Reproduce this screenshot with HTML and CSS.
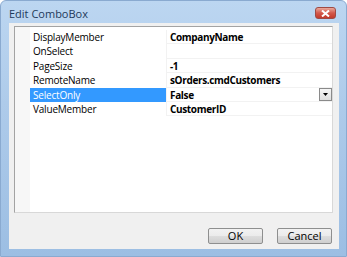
FILE: index.html
```html
<!DOCTYPE html>
<html>
<head>
  <title>Edit ComboBox</title>
  <link rel="stylesheet" href="styles.css">
</head>
<body>
  <div class="window">
    <div class="titlebar">
      <span class="title">Edit ComboBox</span>
      <span class="close-btn">
        <svg width="9" height="7" viewBox="0 0 9 7"><path d="M1 0.5 L8 6.5 M8 0.5 L1 6.5" stroke="#fff" stroke-width="2"/></svg>
      </span>
    </div>

    <div class="client">
      <div class="prop-grid">
        <div class="margin-col"></div>
        <div class="rows">
          <div class="row">
            <div class="name">DisplayMember</div>
            <div class="value">CompanyName</div>
          </div>
          <div class="row">
            <div class="name">OnSelect</div>
            <div class="value"></div>
          </div>
          <div class="row">
            <div class="name">PageSize</div>
            <div class="value">-1</div>
          </div>
          <div class="row">
            <div class="name">RemoteName</div>
            <div class="value">sOrders.cmdCustomers</div>
          </div>
          <div class="row selected">
            <div class="name">SelectOnly</div>
            <div class="value">
              False
              <span class="dropdown">
                <svg width="5" height="3" viewBox="0 0 5 3"><path d="M0 0 H5 L2.5 3 Z" fill="#000"/></svg>
              </span>
            </div>
          </div>
          <div class="row">
            <div class="name">ValueMember</div>
            <div class="value">CustomerID</div>
          </div>
        </div>
      </div>

      <div class="button-row">
        <button class="btn">OK</button>
        <button class="btn">Cancel</button>
      </div>
    </div>
  </div>
</body>
</html>
```

FILE: styles.css
```css
:root {
  --frame: #aecbea;
  --frame-dark: #9cbee3;
  --client-bg: #f0f0f0;
  --grid-border: #a3a3a3;
  --row-line: #f2f2f2;
  --select: #3399ff;
  --text: #000;
}

body {
  margin: 0;
  font-family: "Open Sans", "Noto Sans", sans-serif;
  font-size: 11px;
  color: var(--text);
  background: #fff;
}

.window {
  width: 347px;
  height: 257px;
  box-sizing: border-box;
  display: flex;
  flex-direction: column;
  padding: 0 7px 7px 8px;
  background: linear-gradient(to bottom, #bcd6f1 0%, var(--frame) 40%, var(--frame-dark) 100%);
  border: 1px solid #8aaad0;
  border-radius: 6px 6px 0 0;
}

.titlebar {
  height: 22px;
  display: flex;
  align-items: center;
  justify-content: space-between;
  flex-shrink: 0;
}

.title {
  font-size: 11px;
  color: #1e395b;
  padding-top: 3px;
}

.close-btn {
  width: 19px;
  height: 10px;
  margin-right: 3px;
  margin-top: 2px;
  display: flex;
  align-items: center;
  justify-content: center;
  border: 1px solid #9e4a44;
  border-radius: 3px;
  background: linear-gradient(to bottom, #e9a99c 0%, #d3584a 50%, #c23a2b 100%);
}

.client {
  flex: 1;
  display: flex;
  flex-direction: column;
  background: var(--client-bg);
  padding: 3px 6px 0 5px;
}

.prop-grid {
  height: 185px;
  display: flex;
  background: #fff;
  border: 1px solid var(--grid-border);
  border-right-color: #d8d8d8;
  border-bottom-color: #d8d8d8;
}

.margin-col {
  width: 15px;
  background: #f7f7f7;
  flex-shrink: 0;
}

.rows {
  flex: 1;
  padding-top: 3px;
  font-size: 10px;
}

.row {
  display: flex;
  height: 14.4px;
  line-height: 14px;
}

.name {
  width: 133px;
  padding-left: 3px;
  flex-shrink: 0;
  letter-spacing: -0.2px;
}

.value {
  flex: 1;
  position: relative;
  font-weight: 700;
  letter-spacing: -0.35px;
  padding-left: 3px;
  border-left: 1px solid var(--row-line);
  border-bottom: 1px solid var(--row-line);
  box-sizing: border-box;
}

.row.selected .name {
  background: var(--select);
  color: #fff;
}

.dropdown {
  position: absolute;
  right: 0;
  top: 0;
  width: 11px;
  height: 11px;
  display: flex;
  align-items: center;
  justify-content: center;
  border: 1px solid #8a8a8a;
  background: linear-gradient(to bottom, #f6f6f6, #dedede);
}

.button-row {
  display: flex;
  justify-content: flex-end;
  gap: 14px;
  margin-top: 15px;
  padding-right: 1px;
}

.btn {
  width: 55px;
  height: 16px;
  padding: 0;
  font-family: inherit;
  font-size: 11px;
  line-height: 14px;
  color: var(--text);
  border: 1px solid #8e8f8f;
  border-radius: 2px;
  background: linear-gradient(to bottom, #f2f2f2 0%, #ebebeb 50%, #dddddd 51%, #cfcfcf 100%);
}
```
